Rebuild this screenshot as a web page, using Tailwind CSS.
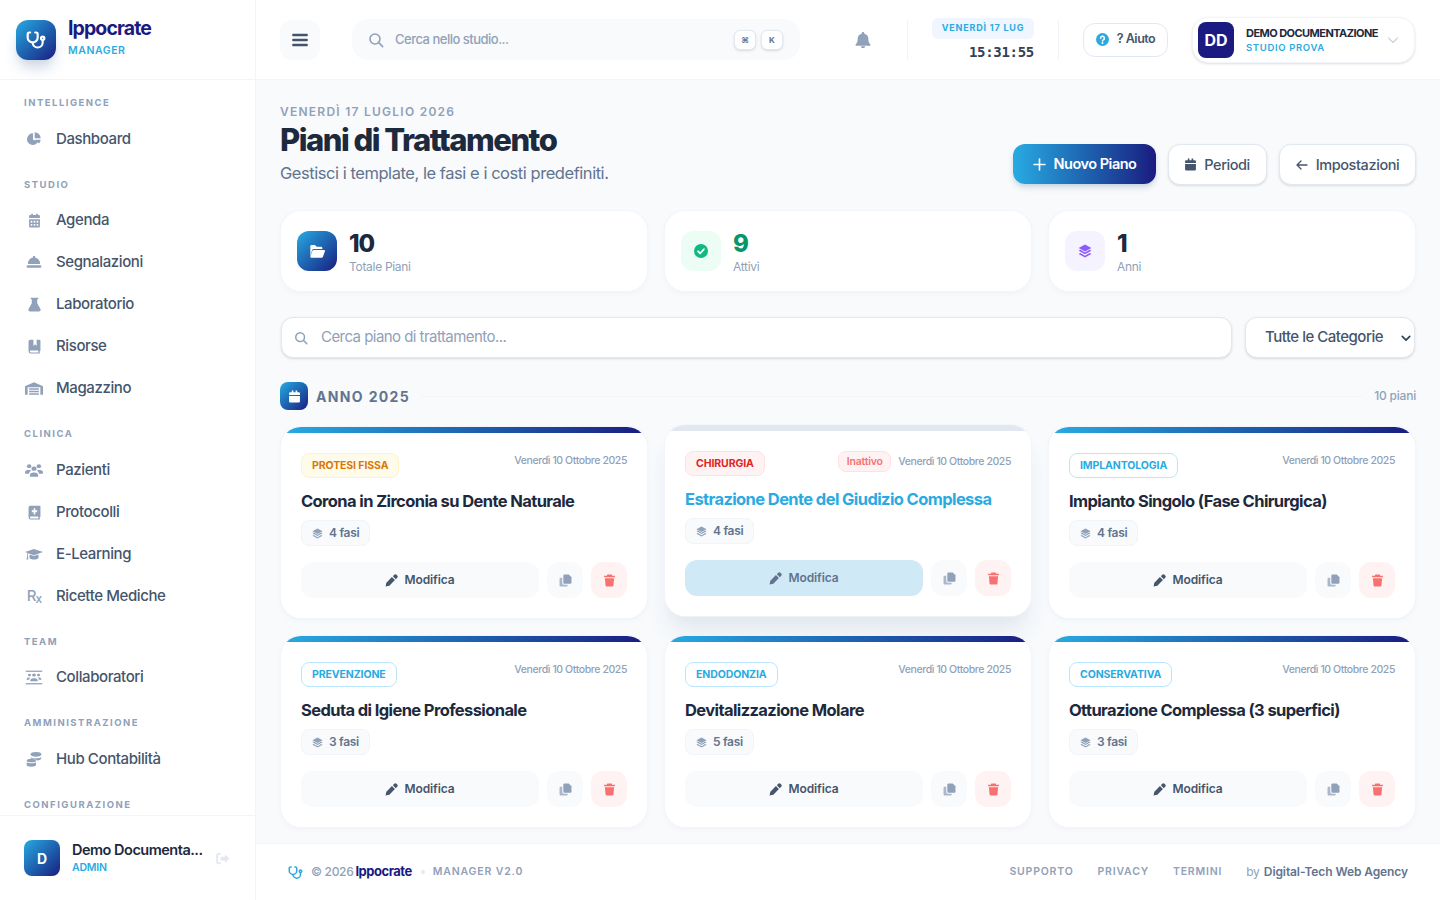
<!DOCTYPE html>
<html lang="it">
<head>
  <meta charset="UTF-8" />
  <title>Piani di Trattamento</title>
  <script src="https://cdn.jsdelivr.net/npm/@tailwindcss/browser@4"></script>
</head>
<body class="h-[900px] w-[1440px] overflow-hidden bg-[#f8fafc] font-['Inter',sans-serif] text-slate-800 flex">

  <!-- sidebar -->
  <aside class="w-[256px] h-[900px] shrink-0 bg-white border-r border-slate-100 flex flex-col">
    <div class="h-[80px] shrink-0 border-b border-slate-100 flex items-center gap-3 pl-4">
      <div class="w-10 h-10 rounded-xl bg-gradient-to-br from-[#29abe2] to-[#1a1a80] shadow-lg shadow-slate-300 flex items-center justify-center">
        <svg class="w-5 h-5 text-white" viewBox="0 0 24 24" fill="none" stroke="currentColor" stroke-width="2.6" stroke-linecap="round" stroke-linejoin="round"><path d="M5 3H4a2 2 0 0 0-2 2v4a6 6 0 0 0 12 0V5a2 2 0 0 0-2-2h-1"/><path d="M8 15a6 6 0 0 0 12 0v-3"/><circle cx="20" cy="10" r="2"/></svg>
      </div>
      <div class="mb-[6px]">
        <div class="text-[19.5px] leading-[24px] font-bold tracking-[-0.9px] text-[#1a1a80]">Ippocrate</div>
        <div class="text-[10.5px] leading-[14px] mt-[4px] font-semibold tracking-[0.55px] text-[#29abe2]">MANAGER</div>
      </div>
    </div>

    <nav class="flex-1 overflow-hidden pt-4 pl-6 pr-4">
      <div class="text-[9.5px] leading-[14px] font-bold tracking-[1.5px] text-slate-400 mb-2">INTELLIGENCE</div>
      <a class="h-[42px] flex items-center gap-3 text-[15px] font-medium tracking-[-0.4px] text-slate-600">
        <svg class="w-4 h-4 mx-[2px] text-slate-400" viewBox="0 0 24 24" fill="currentColor"><path d="M10.5 3.5a8.7 8.7 0 1 0 8 11.500l-8-2z"/><path d="M13 2a9 9 0 0 1 9 9h-9z"/><path d="M13.5 13.2h8.5a9 9 0 0 1-2.600 5.600z"/></svg>
        Dashboard
      </a>

      <div class="text-[9.5px] leading-[14px] font-bold tracking-[1.5px] text-slate-400 mt-[18px] mb-[7px]">STUDIO</div>
      <a class="h-[42px] flex items-center gap-3 text-[15px] font-medium tracking-[-0.4px] text-slate-600">
        <svg class="w-[13px] h-[15px] mx-[3.5px] text-slate-400" viewBox="0 0 24 24" preserveAspectRatio="none" fill="currentColor"><path fill-rule="evenodd" d="M6 1h3v2h6V1h3v2h2a2 2 0 0 1 2 2v3H2V5a2 2 0 0 1 2-2h2zM2 10h20v11a2 2 0 0 1-2 2H4a2 2 0 0 1-2-2zm3 2.500v3h3v-3zm5.500 0v3h3v-3zm5.500 0v3h3v-3zm-11 5v3h3v-3zm5.500 0v3h3v-3zm5.500 0v3h3v-3z"/></svg>
        Agenda
      </a>
      <a class="h-[42px] flex items-center gap-3 text-[15px] font-medium tracking-[-0.4px] text-slate-600">
        <svg class="w-4 h-4 mx-[2px] text-slate-400" viewBox="0 0 24 24" fill="currentColor"><path d="M10.500 3h3v2.200A9 9 0 0 1 21 15H3a9 9 0 0 1 7.500-9.800z"/><rect x="1" y="17" width="22" height="3.500" rx="1.500"/></svg>
        Segnalazioni
      </a>
      <a class="h-[42px] flex items-center gap-3 text-[15px] font-medium tracking-[-0.4px] text-slate-600">
        <svg class="w-[13px] h-[15px] mx-[3.5px] text-slate-400" viewBox="0 0 24 24" preserveAspectRatio="none" fill="currentColor"><path d="M5 1h14v2.500h-2v6.500l6 9a3 3 0 0 1-2.700 4H3.700A3 3 0 0 1 1 19l6-9V3.500H5z"/></svg>
        Laboratorio
      </a>
      <a class="h-[42px] flex items-center gap-3 text-[15px] font-medium tracking-[-0.4px] text-slate-600">
        <svg class="w-[13px] h-[15px] mx-[3.5px] text-slate-400" viewBox="0 0 24 24" preserveAspectRatio="none" fill="currentColor"><path d="M1 4a3 3 0 0 1 3-3h6v10l3-2.500 3 2.500V1h5a2 2 0 0 1 2 2v15a2 2 0 0 1-1.500 2v1.500A1.500 1.500 0 0 1 22 23H5a4 4 0 0 1-4-4zm4 14.500a1.500 1.500 0 0 0 0 3h14v-3z"/></svg>
        Risorse
      </a>
      <a class="h-[42px] flex items-center gap-3 text-[15px] font-medium tracking-[-0.4px] text-slate-600">
        <svg class="w-[18px] h-[15px] mx-[1px] text-slate-400" viewBox="0 0 24 24" preserveAspectRatio="none" fill="currentColor"><path fill-rule="evenodd" d="M0 8.500 12 2l12 6.500V22h-3.500V10h-17v12H0z"/><path d="M5.500 11.500h13v2.500h-13zM5.500 15.500h13V18h-13zM5.500 19.500h13V22h-13z"/></svg>
        Magazzino
      </a>

      <div class="text-[9.5px] leading-[14px] font-bold tracking-[1.5px] text-slate-400 mt-[18px] mb-2">CLINICA</div>
      <a class="h-[42px] flex items-center gap-3 text-[15px] font-medium tracking-[-0.4px] text-slate-600">
        <svg class="w-[18px] h-[15px] mx-[1px] text-slate-400" viewBox="0 0 24 24" preserveAspectRatio="none" fill="currentColor"><circle cx="5.500" cy="5" r="3"/><circle cx="18.500" cy="5" r="3"/><circle cx="12" cy="9" r="3.500"/><path d="M0 15a4 4 0 0 1 4-4h3l1 1.500c-1.500 1-2.500 2.500-2.500 4.500H1a1 1 0 0 1-1-1zM24 15a4 4 0 0 0-4-4h-3l-1 1.500c1.500 1 2.500 2.500 2.500 4.500H23a1 1 0 0 0 1-1zM6.500 20a5 5 0 0 1 5-5h1a5 5 0 0 1 5 5v2H6.500z"/></svg>
        Pazienti
      </a>
      <a class="h-[42px] flex items-center gap-3 text-[15px] font-medium tracking-[-0.4px] text-slate-600">
        <svg class="w-[13px] h-[15px] mx-[3.5px] text-slate-400" viewBox="0 0 24 24" preserveAspectRatio="none" fill="currentColor"><path fill-rule="evenodd" d="M4 1h18a1 1 0 0 1 1 1v16a2 2 0 0 1-1.500 2v1.500A1.500 1.500 0 0 1 22 23H5a4 4 0 0 1-4-4V4a3 3 0 0 1 3-3zm6.500 4v3.500H7v3h3.500V15h3v-3.500H17v-3h-3.500V5zM5 18.500a1.500 1.500 0 0 0 0 3h14v-3z"/></svg>
        Protocolli
      </a>
      <a class="h-[42px] flex items-center gap-3 text-[15px] font-medium tracking-[-0.4px] text-slate-600">
        <svg class="w-[18px] h-[15px] mx-[1px] text-slate-400" viewBox="0 0 24 24" preserveAspectRatio="none" fill="currentColor"><path d="M12 3 0 8l3 1.300V14l-1 6h2.500L4 14V9.900L12 13l12-5z"/><path d="M6 11.800V17c0 1.500 3 3 6 3s6-1.500 6-3v-5.200L12 14.500z"/></svg>
        E-Learning
      </a>
      <a class="h-[42px] flex items-center gap-3 text-[15px] font-medium tracking-[-0.4px] text-slate-600">
        <span class="w-5 text-center text-[15px] leading-4 font-medium tracking-[-1px] text-slate-400">R<span class="text-[12px] relative top-[2px]">x</span></span>
        Ricette Mediche
      </a>

      <div class="text-[9.5px] leading-[14px] font-bold tracking-[1.5px] text-slate-400 mt-[18px] mb-[7px]">TEAM</div>
      <a class="h-[42px] flex items-center gap-3 text-[15px] font-medium tracking-[-0.4px] text-slate-600">
        <svg class="w-[18px] h-[15px] mx-[1px] text-slate-400" viewBox="0 0 24 24" preserveAspectRatio="none" fill="currentColor"><rect x="1" y="1" width="22" height="2"/><rect x="1" y="21" width="22" height="2"/><circle cx="6" cy="8" r="2"/><circle cx="18" cy="8" r="2"/><circle cx="12" cy="8" r="2.500"/><path d="M2 15a3 3 0 0 1 3-3h2c-1 1-1.500 2-1.500 3.500H3a1 1 0 0 1-1-.5zM22 15a3 3 0 0 0-3-3h-2c1 1 1.500 2 1.500 3.500H21a1 1 0 0 0 1-.5zM7 17a4 4 0 0 1 4-4h2a4 4 0 0 1 4 4v1H7z"/></svg>
        Collaboratori
      </a>

      <div class="text-[9.5px] leading-[14px] font-bold tracking-[1.5px] text-slate-400 mt-[18px] mb-2">AMMINISTRAZIONE</div>
      <a class="h-[42px] flex items-center gap-3 text-[15px] font-medium tracking-[-0.4px] text-slate-600">
        <svg class="w-4 h-4 mx-[2px] text-slate-400" viewBox="0 0 24 24" fill="currentColor"><ellipse cx="15" cy="5" rx="8" ry="3.500"/><path d="M7 9.500c1.500 1 4.500 1.500 8 1.500s6-.5 8-1.700V11c0 1.500-2.500 3-6.500 3.300C15 12.500 12 11.500 8.500 11.500H7z"/><path d="M1 14.500C1 12.500 4.500 12 8 12s7 .5 7 2.500S11.500 17 8 17s-7-.5-7-2.500z"/><path d="M1 17c1.500 1 4 1.500 7 1.500s5.500-.5 7-1.500v4c0 1.500-3.500 2.500-7 2.500S1 22.500 1 21z"/></svg>
        Hub Contabilità
      </a>

      <div class="text-[9.5px] leading-[14px] font-bold tracking-[1.5px] text-slate-400 mt-[18px] mb-[7px]">CONFIGURAZIONE</div>
    </nav>

    <div class="h-[85px] shrink-0 border-t border-slate-100 flex items-center pl-6 pr-6">
      <div class="w-9 h-9 rounded-lg bg-gradient-to-br from-[#29abe2] to-[#1a1a80] text-white text-[14px] font-bold flex items-center justify-center">D</div>
      <div class="ml-3 w-[131px]">
        <div class="text-[14.5px] leading-[18px] font-semibold tracking-[-0.5px] truncate text-slate-800">Demo Documenta...</div>
        <div class="mt-[2px] text-[10.5px] leading-[14px] font-semibold tracking-[-0.2px] text-[#29abe2]">ADMIN</div>
      </div>
      <svg class="w-[15px] h-[15px] ml-auto mr-[1px] text-slate-200" viewBox="0 0 24 24" fill="currentColor"><path d="M9 3H5a3 3 0 0 0-3 3v12a3 3 0 0 0 3 3h4v-3H5V6h4z"/><path d="M16 5l7 7-7 7v-4H9V9h7z"/></svg>
    </div>
  </aside>

  <div class="flex-1 min-w-0 h-[900px] flex flex-col">
    <!-- top bar -->
    <header class="h-[80px] shrink-0 bg-white border-b border-slate-100 flex items-center pl-6 pr-6">
      <button class="w-10 h-10 rounded-xl bg-[#f8fafc] flex items-center justify-center text-slate-600">
        <svg class="w-5 h-5" viewBox="0 0 24 24" fill="none" stroke="currentColor" stroke-width="3" stroke-linecap="round"><path d="M4 6h16M4 12h16M4 18h16"/></svg>
      </button>
      <div class="ml-8 w-[448px] h-[41px] rounded-2xl bg-[#f8fafc] flex items-center pl-4 pr-[17px]">
        <svg class="w-4 h-4 text-slate-400" viewBox="0 0 24 24" fill="none" stroke="currentColor" stroke-width="2.400" stroke-linecap="round"><circle cx="10.500" cy="10.500" r="7.500"/><path d="m16 16 6 6"/></svg>
        <span class="ml-[11px] text-[13px] tracking-[-0.5px] font-medium text-slate-400">Cerca nello studio...</span>
        <span class="ml-auto flex gap-[5px]">
          <span class="w-[22px] h-[20px] rounded-md bg-white border border-slate-200 shadow-sm flex items-center justify-center text-[8px] font-bold text-slate-500">⌘</span>
          <span class="w-[22px] h-[20px] rounded-md bg-white border border-slate-200 shadow-sm flex items-center justify-center text-[8px] font-bold text-slate-500">K</span>
        </span>
      </div>
      <svg class="ml-[55px] w-4 h-4 text-slate-400" viewBox="0 0 24 24" fill="currentColor"><path d="M12 0a2 2 0 0 0-2 2v.7A8 8 0 0 0 4 10.500c0 4-1 6-3 8v2h22v-2c-2-2-3-4-3-8a8 8 0 0 0-6-7.800V2a2 2 0 0 0-2-2zM9 21.500a3 3 0 0 0 6 0z"/></svg>
      <div class="ml-9 w-px h-10 bg-slate-100"></div>
      <div class="ml-6 w-[102px] flex flex-col items-end">
        <div class="w-full h-[21px] rounded-md bg-[#eff6ff] flex items-center justify-center text-[9px] font-bold tracking-[0.8px] text-[#29abe2]">VENERDÌ 17 LUG</div>
        <div class="mt-[3px] text-[14px] leading-[20px] font-bold font-['DejaVu_Sans_Mono',monospace] tracking-[-0.3px] text-slate-700">15:31:55</div>
      </div>
      <div class="ml-6 w-px h-10 bg-slate-100"></div>
      <button class="ml-6 w-[85px] h-[34px] rounded-xl bg-white border border-slate-200 flex items-center justify-center gap-2 text-[12.5px] font-semibold tracking-[-0.5px] text-slate-600">
        <svg class="w-[13px] h-[13px]" viewBox="0 0 24 24"><circle cx="12" cy="12" r="12" fill="#29abe2"/><path d="M8.500 9.500a3.500 3.500 0 1 1 5 3.200c-1 .5-1.500 1-1.500 2" fill="none" stroke="#fff" stroke-width="2.800" stroke-linecap="round"/><circle cx="12" cy="18.500" r="1.700" fill="#fff"/></svg>
        ? Aiuto
      </button>
      <div class="ml-6 w-[223px] h-[46px] rounded-2xl bg-white border border-slate-100 shadow-sm flex items-center pl-[5px]">
        <div class="w-9 h-9 rounded-lg bg-[#1a1a80] text-white text-[16px] font-bold flex items-center justify-center">DD</div>
        <div class="ml-3">
          <div class="text-[11px] leading-[14px] font-bold tracking-[-0.55px] text-slate-800">DEMO DOCUMENTAZIONE</div>
          <div class="mt-[1px] text-[9.5px] leading-[13px] font-semibold tracking-[0.65px] text-[#29abe2]">STUDIO PROVA</div>
        </div>
        <svg class="ml-auto mr-[15px] w-[12px] h-[12px] text-slate-300" viewBox="0 0 24 24" fill="none" stroke="currentColor" stroke-width="2.500" stroke-linecap="round" stroke-linejoin="round"><path d="m3 8 9 9 9-9"/></svg>
      </div>
    </header>

    <!-- page -->
    <main class="flex-1 min-h-0 overflow-hidden pl-6 pr-6 pt-6">
      <div class="flex items-end justify-between">
        <div>
          <div class="text-[12px] leading-[16px] font-semibold tracking-[1.25px] text-slate-400">VENERDÌ 17 LUGLIO 2026</div>
          <h1 class="text-[31px] leading-[40px] font-extrabold tracking-[-1.5px] text-slate-800">Piani di Trattamento</h1>
          <p class="text-[16.5px] leading-[26px] tracking-[-0.45px] text-slate-500">Gestisci i template, le fasi e i costi predefiniti.</p>
        </div>
        <div class="flex gap-3 mb-[1px]">
          <button class="w-[143px] h-[40px] rounded-xl bg-gradient-to-r from-[#29abe2] to-[#1a1a80] shadow-md shadow-slate-300 text-white flex items-center justify-center gap-2 text-[14.5px] font-semibold tracking-[-0.5px]">
            <svg class="w-[13px] h-[13px]" viewBox="0 0 24 24" fill="none" stroke="currentColor" stroke-width="3" stroke-linecap="round"><path d="M12 2v20M2 12h20"/></svg>
            Nuovo Piano
          </button>
          <button class="w-[99px] h-[41px] rounded-xl bg-white border border-slate-200 shadow-sm text-slate-600 flex items-center justify-center gap-2 text-[14.5px] font-medium tracking-[-0.45px]">
            <svg class="w-[11px] h-[13px]" viewBox="0 0 20 24" fill="currentColor"><path d="M5 1h3v3h4V1h3v3h3a2 2 0 0 1 2 2v3H0V6a2 2 0 0 1 2-2h3zM0 11h20v10a2 2 0 0 1-2 2H2a2 2 0 0 1-2-2z"/></svg>
            Periodi
          </button>
          <button class="w-[137px] h-[41px] rounded-xl bg-white border border-slate-200 shadow-sm text-slate-600 flex items-center justify-center gap-2 text-[14.5px] font-medium tracking-[-0.4px]">
            <svg class="w-[12px] h-[12px]" viewBox="0 0 24 24" fill="none" stroke="currentColor" stroke-width="2.600" stroke-linecap="round" stroke-linejoin="round"><path d="M22 12H3M10 4l-8 8 8 8"/></svg>
            Impostazioni
          </button>
        </div>
      </div>

      <!-- stats -->
      <div class="mt-[25px] ml-[1px] grid grid-cols-[repeat(3,366px)] gap-[18px]">
        <div class="h-[80px] rounded-[20px] bg-white ring-1 ring-slate-100/70 shadow-[0_2px_6px_rgba(15,23,42,0.04)] flex items-center pl-4 gap-3">
          <div class="w-10 h-10 rounded-xl bg-gradient-to-br from-[#29abe2] to-[#1a1a80] flex items-center justify-center">
            <svg class="w-4 h-4 text-white" viewBox="0 0 24 24" fill="currentColor"><path d="M2 20V5a2 2 0 0 1 2-2h5l2.500 2.500H18a2 2 0 0 1 2 2V9H7a2.500 2.500 0 0 0-2.300 1.500z"/><path d="M7 10.500h15.500a1.500 1.500 0 0 1 1.400 2l-3 8a2 2 0 0 1-2 1.500H3.500a1.500 1.500 0 0 1-1.400-2l3-8.200a2 2 0 0 1 1.900-1.300z"/></svg>
          </div>
          <div class="mt-1">
            <div class="text-[24px] leading-[26px] font-extrabold tracking-[-1px] text-slate-800">10</div>
            <div class="mt-[2px] text-[12px] leading-[16px] tracking-[-0.3px] text-slate-400">Totale Piani</div>
          </div>
        </div>
        <div class="h-[80px] rounded-[20px] bg-white ring-1 ring-slate-100/70 shadow-[0_2px_6px_rgba(15,23,42,0.04)] flex items-center pl-4 gap-3">
          <div class="w-10 h-10 rounded-xl bg-[#ecfdf5] flex items-center justify-center">
            <svg class="w-[14px] h-[14px]" viewBox="0 0 24 24"><circle cx="12" cy="12" r="12" fill="#10b981"/><path d="m7 12.500 3.500 3.500L17 9" fill="none" stroke="#fff" stroke-width="3" stroke-linecap="round" stroke-linejoin="round"/></svg>
          </div>
          <div class="mt-1">
            <div class="text-[24px] leading-[26px] font-extrabold tracking-[-1px] text-[#059669]">9</div>
            <div class="mt-[2px] text-[12px] leading-[16px] tracking-[-0.3px] text-slate-400">Attivi</div>
          </div>
        </div>
        <div class="h-[80px] rounded-[20px] bg-white ring-1 ring-slate-100/70 shadow-[0_2px_6px_rgba(15,23,42,0.04)] flex items-center pl-4 gap-3">
          <div class="w-10 h-10 rounded-xl bg-[#f5f3ff] flex items-center justify-center">
            <svg class="w-[14px] h-[14px] text-[#8b5cf6]" viewBox="0 0 24 24" fill="currentColor"><path d="M12 1 23 7l-11 6L1 7z"/><path d="m1 11.500 3-1.500 8 4.500 8-4.500 3 1.500-11 6z"/><path d="m1 17 3-1.500 8 4.500 8-4.500 3 1.500-11 6z"/></svg>
          </div>
          <div class="mt-1">
            <div class="text-[24px] leading-[26px] font-extrabold tracking-[-1px] text-slate-800">1</div>
            <div class="mt-[2px] text-[12px] leading-[16px] tracking-[-0.3px] text-slate-400">Anni</div>
          </div>
        </div>
      </div>

      <!-- filters -->
      <div class="mt-[26px] px-[1px] flex gap-[13px]">
        <div class="flex-1 h-[41px] rounded-xl bg-white border border-slate-200 shadow-sm flex items-center pl-[12px]">
          <svg class="w-[14px] h-[14px] text-slate-400" viewBox="0 0 24 24" fill="none" stroke="currentColor" stroke-width="2.600" stroke-linecap="round"><circle cx="10.500" cy="10.500" r="7.500"/><path d="m16 16 6 6"/></svg>
          <span class="ml-[13px] text-[15px] tracking-[-0.55px] text-slate-400">Cerca piano di trattamento...</span>
        </div>
        <div class="w-[170px] h-[41px] rounded-xl bg-white border border-slate-200 shadow-sm flex items-center pl-[19px] pr-[3px] text-[15px] font-medium tracking-[-0.5px] text-slate-600">
          Tutte le Categorie
          <svg class="ml-auto w-[10px] h-[10px] text-slate-700" viewBox="0 0 24 24" fill="none" stroke="currentColor" stroke-width="4" stroke-linecap="round" stroke-linejoin="round"><path d="m3 8 9 9 9-9"/></svg>
        </div>
      </div>

      <!-- year header -->
      <div class="mt-6 h-[28px] flex items-center">
        <div class="w-7 h-7 rounded-lg bg-gradient-to-br from-[#29abe2] to-[#1a1a80] flex items-center justify-center">
          <svg class="w-[11px] h-[13px] text-white" viewBox="0 0 20 24" fill="currentColor"><path d="M5 1h3v3h4V1h3v3h3a2 2 0 0 1 2 2v3H0V6a2 2 0 0 1 2-2h3zM0 11h20v10a2 2 0 0 1-2 2H2a2 2 0 0 1-2-2z"/></svg>
        </div>
        <span class="ml-2 text-[14px] font-bold tracking-[1.35px] text-slate-500">ANNO 2025</span>
        <div class="flex-1 h-px bg-slate-100 mx-3"></div>
        <span class="text-[12px] tracking-[-0.2px] font-medium text-slate-400">10 piani</span>
      </div>

      <!-- plans -->
      <div class="mt-[17px] ml-[1px] grid grid-cols-[repeat(3,366px)] gap-[18px]">
        <article class="h-[191px] rounded-[20px] overflow-hidden bg-white ring-1 ring-slate-100/70 shadow-[0_2px_6px_rgba(15,23,42,0.04)]">
          <div class="h-[6px] bg-gradient-to-r from-[#29abe2] to-[#1a1a80]"></div>
          <div class="pt-5 px-5">
            <div class="flex items-start justify-between">
              <span class="h-[25px] px-[10px] rounded-lg bg-[#fffbeb] border border-[#fef3c7] flex items-center text-[10.5px] font-bold tracking-[-0.1px] text-[#d97706]">PROTESI FISSA</span>
              <span class="text-[10.5px] leading-[16px] tracking-[-0.4px] font-medium text-slate-400">Venerdì 10 Ottobre 2025</span>
            </div>
            <h3 class="mt-[11px] text-[16.5px] leading-[24px] font-bold tracking-[-0.6px] text-slate-800">Corona in Zirconia su Dente Naturale</h3>
            <div class="mt-[7px] inline-flex h-[26px] px-[10px] rounded-lg bg-[#f8fafc] border border-slate-100 items-center gap-[6px] text-[12px] font-semibold tracking-[-0.3px] text-slate-500">
              <svg class="w-[11px] h-[11px] text-slate-400" viewBox="0 0 24 24" fill="currentColor"><path d="M12 1 23 7l-11 6L1 7z"/><path d="m1 11.500 3-1.500 8 4.500 8-4.500 3 1.500-11 6z"/><path d="m1 17 3-1.500 8 4.500 8-4.500 3 1.500-11 6z"/></svg>
              4 fasi
            </div>
            <div class="mt-4 flex gap-2">
              <button class="flex-1 h-9 rounded-xl bg-[#f8fafc] flex items-center justify-center gap-[6px] text-[12px] font-semibold tracking-[-0.1px] text-slate-600">
                <svg class="w-[13px] h-[13px]" viewBox="0 0 24 24" fill="currentColor"><path d="M17 1.500a3 3 0 0 1 4.200 0l1.300 1.300a3 3 0 0 1 0 4.200L20 9.500 14.500 4zM12.800 5.700l5.500 5.500L8 21.500 1 23l1.500-7z"/></svg>
                Modifica
              </button>
              <button class="w-9 h-9 rounded-xl bg-[#f8fafc] flex items-center justify-center">
                <svg class="w-[13px] h-[13px] text-slate-400" viewBox="0 0 24 24" fill="currentColor"><path d="M10 1h8l5 5v10a2 2 0 0 1-2 2H10a2 2 0 0 1-2-2V3a2 2 0 0 1 2-2z"/><path d="M3 7h3v9a4 4 0 0 0 4 4h6v1a2 2 0 0 1-2 2H3a2 2 0 0 1-2-2V9a2 2 0 0 1 2-2z" opacity=".75"/></svg>
              </button>
              <button class="w-9 h-9 rounded-xl bg-[#fef2f2] flex items-center justify-center">
                <svg class="w-[13px] h-[13px] text-[#f87171]" viewBox="0 0 24 24" fill="currentColor"><path d="M8 1h8l1 2h5v3H2V3h5zM3.500 8h17l-1.300 13.500A2 2 0 0 1 17 23H7a2 2 0 0 1-2.200-1.500z"/></svg>
              </button>
            </div>
          </div>
        </article>

        <article class="h-[191px] -mt-[2px] rounded-[20px] overflow-hidden bg-white ring-1 ring-slate-100/70 shadow-xl shadow-slate-200">
          <div class="h-[6px] bg-[#e2e8f0]"></div>
          <div class="pt-5 px-5">
            <div class="flex items-start justify-between">
              <span class="h-[25px] px-[10px] rounded-lg bg-[#fef2f2] border border-[#fee2e2] flex items-center text-[10.5px] font-bold tracking-[-0.1px] text-[#dc2626]">CHIRURGIA</span>
              <span class="flex items-center gap-[7px]">
                <span class="w-[53px] h-[21px] rounded-lg bg-[#fef2f2] border border-[#fee2e2] flex items-center justify-center text-[10.5px] font-semibold tracking-[-0.2px] text-[#f87171]">Inattivo</span>
                <span class="text-[10.5px] leading-[16px] tracking-[-0.4px] font-medium text-slate-400">Venerdì 10 Ottobre 2025</span>
              </span>
            </div>
            <h3 class="mt-[11px] text-[16.5px] leading-[24px] font-bold tracking-[-0.6px] text-[#29abe2]">Estrazione Dente del Giudizio Complessa</h3>
            <div class="mt-[7px] inline-flex h-[26px] px-[10px] rounded-lg bg-[#f8fafc] border border-slate-100 items-center gap-[6px] text-[12px] font-semibold tracking-[-0.3px] text-slate-500">
              <svg class="w-[11px] h-[11px] text-slate-400" viewBox="0 0 24 24" fill="currentColor"><path d="M12 1 23 7l-11 6L1 7z"/><path d="m1 11.500 3-1.500 8 4.500 8-4.500 3 1.500-11 6z"/><path d="m1 17 3-1.500 8 4.500 8-4.500 3 1.500-11 6z"/></svg>
              4 fasi
            </div>
            <div class="mt-4 flex gap-2">
              <button class="flex-1 h-9 rounded-xl bg-[#cfe9f6] flex items-center justify-center gap-[6px] text-[12px] font-semibold tracking-[-0.1px] text-slate-500">
                <svg class="w-[13px] h-[13px]" viewBox="0 0 24 24" fill="currentColor"><path d="M17 1.500a3 3 0 0 1 4.200 0l1.300 1.300a3 3 0 0 1 0 4.200L20 9.500 14.500 4zM12.800 5.700l5.500 5.500L8 21.500 1 23l1.500-7z"/></svg>
                Modifica
              </button>
              <button class="w-9 h-9 rounded-xl bg-[#f8fafc] flex items-center justify-center">
                <svg class="w-[13px] h-[13px] text-slate-400" viewBox="0 0 24 24" fill="currentColor"><path d="M10 1h8l5 5v10a2 2 0 0 1-2 2H10a2 2 0 0 1-2-2V3a2 2 0 0 1 2-2z"/><path d="M3 7h3v9a4 4 0 0 0 4 4h6v1a2 2 0 0 1-2 2H3a2 2 0 0 1-2-2V9a2 2 0 0 1 2-2z" opacity=".75"/></svg>
              </button>
              <button class="w-9 h-9 rounded-xl bg-[#fef2f2] flex items-center justify-center">
                <svg class="w-[13px] h-[13px] text-[#f87171]" viewBox="0 0 24 24" fill="currentColor"><path d="M8 1h8l1 2h5v3H2V3h5zM3.500 8h17l-1.300 13.500A2 2 0 0 1 17 23H7a2 2 0 0 1-2.200-1.500z"/></svg>
              </button>
            </div>
          </div>
        </article>

        <article class="h-[191px] rounded-[20px] overflow-hidden bg-white ring-1 ring-slate-100/70 shadow-[0_2px_6px_rgba(15,23,42,0.04)]">
          <div class="h-[6px] bg-gradient-to-r from-[#29abe2] to-[#1a1a80]"></div>
          <div class="pt-5 px-5">
            <div class="flex items-start justify-between">
              <span class="h-[25px] px-[10px] rounded-lg bg-white border border-[#bae6fd] flex items-center text-[10.5px] font-bold tracking-[-0.1px] text-[#29abe2]">IMPLANTOLOGIA</span>
              <span class="text-[10.5px] leading-[16px] tracking-[-0.4px] font-medium text-slate-400">Venerdì 10 Ottobre 2025</span>
            </div>
            <h3 class="mt-[11px] text-[16.5px] leading-[24px] font-bold tracking-[-0.6px] text-slate-800">Impianto Singolo (Fase Chirurgica)</h3>
            <div class="mt-[7px] inline-flex h-[26px] px-[10px] rounded-lg bg-[#f8fafc] border border-slate-100 items-center gap-[6px] text-[12px] font-semibold tracking-[-0.3px] text-slate-500">
              <svg class="w-[11px] h-[11px] text-slate-400" viewBox="0 0 24 24" fill="currentColor"><path d="M12 1 23 7l-11 6L1 7z"/><path d="m1 11.500 3-1.500 8 4.500 8-4.500 3 1.500-11 6z"/><path d="m1 17 3-1.500 8 4.500 8-4.500 3 1.500-11 6z"/></svg>
              4 fasi
            </div>
            <div class="mt-4 flex gap-2">
              <button class="flex-1 h-9 rounded-xl bg-[#f8fafc] flex items-center justify-center gap-[6px] text-[12px] font-semibold tracking-[-0.1px] text-slate-600">
                <svg class="w-[13px] h-[13px]" viewBox="0 0 24 24" fill="currentColor"><path d="M17 1.500a3 3 0 0 1 4.200 0l1.300 1.300a3 3 0 0 1 0 4.200L20 9.500 14.500 4zM12.800 5.700l5.500 5.500L8 21.500 1 23l1.500-7z"/></svg>
                Modifica
              </button>
              <button class="w-9 h-9 rounded-xl bg-[#f8fafc] flex items-center justify-center">
                <svg class="w-[13px] h-[13px] text-slate-400" viewBox="0 0 24 24" fill="currentColor"><path d="M10 1h8l5 5v10a2 2 0 0 1-2 2H10a2 2 0 0 1-2-2V3a2 2 0 0 1 2-2z"/><path d="M3 7h3v9a4 4 0 0 0 4 4h6v1a2 2 0 0 1-2 2H3a2 2 0 0 1-2-2V9a2 2 0 0 1 2-2z" opacity=".75"/></svg>
              </button>
              <button class="w-9 h-9 rounded-xl bg-[#fef2f2] flex items-center justify-center">
                <svg class="w-[13px] h-[13px] text-[#f87171]" viewBox="0 0 24 24" fill="currentColor"><path d="M8 1h8l1 2h5v3H2V3h5zM3.500 8h17l-1.300 13.500A2 2 0 0 1 17 23H7a2 2 0 0 1-2.200-1.500z"/></svg>
              </button>
            </div>
          </div>
        </article>

        <article class="h-[191px] rounded-[20px] overflow-hidden bg-white ring-1 ring-slate-100/70 shadow-[0_2px_6px_rgba(15,23,42,0.04)]">
          <div class="h-[6px] bg-gradient-to-r from-[#29abe2] to-[#1a1a80]"></div>
          <div class="pt-5 px-5">
            <div class="flex items-start justify-between">
              <span class="h-[25px] px-[10px] rounded-lg bg-white border border-[#bae6fd] flex items-center text-[10.5px] font-bold tracking-[-0.1px] text-[#29abe2]">PREVENZIONE</span>
              <span class="text-[10.5px] leading-[16px] tracking-[-0.4px] font-medium text-slate-400">Venerdì 10 Ottobre 2025</span>
            </div>
            <h3 class="mt-[11px] text-[16.5px] leading-[24px] font-bold tracking-[-0.6px] text-slate-800">Seduta di Igiene Professionale</h3>
            <div class="mt-[7px] inline-flex h-[26px] px-[10px] rounded-lg bg-[#f8fafc] border border-slate-100 items-center gap-[6px] text-[12px] font-semibold tracking-[-0.3px] text-slate-500">
              <svg class="w-[11px] h-[11px] text-slate-400" viewBox="0 0 24 24" fill="currentColor"><path d="M12 1 23 7l-11 6L1 7z"/><path d="m1 11.500 3-1.500 8 4.500 8-4.500 3 1.500-11 6z"/><path d="m1 17 3-1.500 8 4.500 8-4.500 3 1.500-11 6z"/></svg>
              3 fasi
            </div>
            <div class="mt-4 flex gap-2">
              <button class="flex-1 h-9 rounded-xl bg-[#f8fafc] flex items-center justify-center gap-[6px] text-[12px] font-semibold tracking-[-0.1px] text-slate-600">
                <svg class="w-[13px] h-[13px]" viewBox="0 0 24 24" fill="currentColor"><path d="M17 1.500a3 3 0 0 1 4.200 0l1.300 1.300a3 3 0 0 1 0 4.200L20 9.500 14.500 4zM12.800 5.700l5.500 5.500L8 21.500 1 23l1.500-7z"/></svg>
                Modifica
              </button>
              <button class="w-9 h-9 rounded-xl bg-[#f8fafc] flex items-center justify-center">
                <svg class="w-[13px] h-[13px] text-slate-400" viewBox="0 0 24 24" fill="currentColor"><path d="M10 1h8l5 5v10a2 2 0 0 1-2 2H10a2 2 0 0 1-2-2V3a2 2 0 0 1 2-2z"/><path d="M3 7h3v9a4 4 0 0 0 4 4h6v1a2 2 0 0 1-2 2H3a2 2 0 0 1-2-2V9a2 2 0 0 1 2-2z" opacity=".75"/></svg>
              </button>
              <button class="w-9 h-9 rounded-xl bg-[#fef2f2] flex items-center justify-center">
                <svg class="w-[13px] h-[13px] text-[#f87171]" viewBox="0 0 24 24" fill="currentColor"><path d="M8 1h8l1 2h5v3H2V3h5zM3.500 8h17l-1.300 13.500A2 2 0 0 1 17 23H7a2 2 0 0 1-2.200-1.500z"/></svg>
              </button>
            </div>
          </div>
        </article>

        <article class="h-[191px] rounded-[20px] overflow-hidden bg-white ring-1 ring-slate-100/70 shadow-[0_2px_6px_rgba(15,23,42,0.04)]">
          <div class="h-[6px] bg-gradient-to-r from-[#29abe2] to-[#1a1a80]"></div>
          <div class="pt-5 px-5">
            <div class="flex items-start justify-between">
              <span class="h-[25px] px-[10px] rounded-lg bg-white border border-[#bae6fd] flex items-center text-[10.5px] font-bold tracking-[-0.1px] text-[#29abe2]">ENDODONZIA</span>
              <span class="text-[10.5px] leading-[16px] tracking-[-0.4px] font-medium text-slate-400">Venerdì 10 Ottobre 2025</span>
            </div>
            <h3 class="mt-[11px] text-[16.5px] leading-[24px] font-bold tracking-[-0.6px] text-slate-800">Devitalizzazione Molare</h3>
            <div class="mt-[7px] inline-flex h-[26px] px-[10px] rounded-lg bg-[#f8fafc] border border-slate-100 items-center gap-[6px] text-[12px] font-semibold tracking-[-0.3px] text-slate-500">
              <svg class="w-[11px] h-[11px] text-slate-400" viewBox="0 0 24 24" fill="currentColor"><path d="M12 1 23 7l-11 6L1 7z"/><path d="m1 11.500 3-1.500 8 4.500 8-4.500 3 1.500-11 6z"/><path d="m1 17 3-1.500 8 4.500 8-4.500 3 1.500-11 6z"/></svg>
              5 fasi
            </div>
            <div class="mt-4 flex gap-2">
              <button class="flex-1 h-9 rounded-xl bg-[#f8fafc] flex items-center justify-center gap-[6px] text-[12px] font-semibold tracking-[-0.1px] text-slate-600">
                <svg class="w-[13px] h-[13px]" viewBox="0 0 24 24" fill="currentColor"><path d="M17 1.500a3 3 0 0 1 4.200 0l1.300 1.300a3 3 0 0 1 0 4.200L20 9.500 14.500 4zM12.800 5.700l5.500 5.500L8 21.500 1 23l1.500-7z"/></svg>
                Modifica
              </button>
              <button class="w-9 h-9 rounded-xl bg-[#f8fafc] flex items-center justify-center">
                <svg class="w-[13px] h-[13px] text-slate-400" viewBox="0 0 24 24" fill="currentColor"><path d="M10 1h8l5 5v10a2 2 0 0 1-2 2H10a2 2 0 0 1-2-2V3a2 2 0 0 1 2-2z"/><path d="M3 7h3v9a4 4 0 0 0 4 4h6v1a2 2 0 0 1-2 2H3a2 2 0 0 1-2-2V9a2 2 0 0 1 2-2z" opacity=".75"/></svg>
              </button>
              <button class="w-9 h-9 rounded-xl bg-[#fef2f2] flex items-center justify-center">
                <svg class="w-[13px] h-[13px] text-[#f87171]" viewBox="0 0 24 24" fill="currentColor"><path d="M8 1h8l1 2h5v3H2V3h5zM3.500 8h17l-1.300 13.500A2 2 0 0 1 17 23H7a2 2 0 0 1-2.200-1.500z"/></svg>
              </button>
            </div>
          </div>
        </article>

        <article class="h-[191px] rounded-[20px] overflow-hidden bg-white ring-1 ring-slate-100/70 shadow-[0_2px_6px_rgba(15,23,42,0.04)]">
          <div class="h-[6px] bg-gradient-to-r from-[#29abe2] to-[#1a1a80]"></div>
          <div class="pt-5 px-5">
            <div class="flex items-start justify-between">
              <span class="h-[25px] px-[10px] rounded-lg bg-white border border-[#bae6fd] flex items-center text-[10.5px] font-bold tracking-[-0.1px] text-[#29abe2]">CONSERVATIVA</span>
              <span class="text-[10.5px] leading-[16px] tracking-[-0.4px] font-medium text-slate-400">Venerdì 10 Ottobre 2025</span>
            </div>
            <h3 class="mt-[11px] text-[16.5px] leading-[24px] font-bold tracking-[-0.6px] text-slate-800">Otturazione Complessa (3 superfici)</h3>
            <div class="mt-[7px] inline-flex h-[26px] px-[10px] rounded-lg bg-[#f8fafc] border border-slate-100 items-center gap-[6px] text-[12px] font-semibold tracking-[-0.3px] text-slate-500">
              <svg class="w-[11px] h-[11px] text-slate-400" viewBox="0 0 24 24" fill="currentColor"><path d="M12 1 23 7l-11 6L1 7z"/><path d="m1 11.500 3-1.500 8 4.500 8-4.500 3 1.500-11 6z"/><path d="m1 17 3-1.500 8 4.500 8-4.500 3 1.500-11 6z"/></svg>
              3 fasi
            </div>
            <div class="mt-4 flex gap-2">
              <button class="flex-1 h-9 rounded-xl bg-[#f8fafc] flex items-center justify-center gap-[6px] text-[12px] font-semibold tracking-[-0.1px] text-slate-600">
                <svg class="w-[13px] h-[13px]" viewBox="0 0 24 24" fill="currentColor"><path d="M17 1.500a3 3 0 0 1 4.200 0l1.300 1.300a3 3 0 0 1 0 4.200L20 9.500 14.500 4zM12.800 5.700l5.500 5.500L8 21.500 1 23l1.500-7z"/></svg>
                Modifica
              </button>
              <button class="w-9 h-9 rounded-xl bg-[#f8fafc] flex items-center justify-center">
                <svg class="w-[13px] h-[13px] text-slate-400" viewBox="0 0 24 24" fill="currentColor"><path d="M10 1h8l5 5v10a2 2 0 0 1-2 2H10a2 2 0 0 1-2-2V3a2 2 0 0 1 2-2z"/><path d="M3 7h3v9a4 4 0 0 0 4 4h6v1a2 2 0 0 1-2 2H3a2 2 0 0 1-2-2V9a2 2 0 0 1 2-2z" opacity=".75"/></svg>
              </button>
              <button class="w-9 h-9 rounded-xl bg-[#fef2f2] flex items-center justify-center">
                <svg class="w-[13px] h-[13px] text-[#f87171]" viewBox="0 0 24 24" fill="currentColor"><path d="M8 1h8l1 2h5v3H2V3h5zM3.500 8h17l-1.300 13.500A2 2 0 0 1 17 23H7a2 2 0 0 1-2.200-1.500z"/></svg>
              </button>
            </div>
          </div>
        </article>
      </div>
    </main>

    <!-- footer -->
    <footer class="h-[57px] shrink-0 bg-white border-t border-slate-100 flex items-center pl-8 pr-8 text-[12px]">
      <svg class="w-[15px] h-[15px] text-[#29abe2]" viewBox="0 0 24 24" fill="none" stroke="currentColor" stroke-width="2.400" stroke-linecap="round" stroke-linejoin="round"><path d="M5 3H4a2 2 0 0 0-2 2v4a6 6 0 0 0 12 0V5a2 2 0 0 0-2-2h-1"/><path d="M8 15a6 6 0 0 0 12 0v-3"/><circle cx="20" cy="10" r="2"/></svg>
      <span class="ml-2 font-medium tracking-[-0.3px] text-slate-400">© 2026</span>
      <span class="ml-[2px] text-[13px] font-bold tracking-[-0.5px] text-[#1a1a80]">Ippocrate</span>
      <span class="ml-[9px] w-1 h-1 rounded-full bg-slate-200"></span>
      <span class="ml-2 text-[10.5px] font-semibold tracking-[0.85px] text-slate-400">MANAGER V2.0</span>
      <span class="ml-auto text-[10.5px] font-semibold tracking-[0.8px] text-slate-400">SUPPORTO</span>
      <span class="ml-6 text-[10.5px] font-semibold tracking-[0.8px] text-slate-400">PRIVACY</span>
      <span class="ml-6 text-[10.5px] font-semibold tracking-[0.8px] text-slate-400">TERMINI</span>
      <span class="ml-6 font-normal tracking-[-0.2px] text-slate-400">by <span class="ml-[1px] font-semibold tracking-[-0.1px] text-slate-500">Digital-Tech Web Agency</span></span>
    </footer>
  </div>
</body>
</html>
